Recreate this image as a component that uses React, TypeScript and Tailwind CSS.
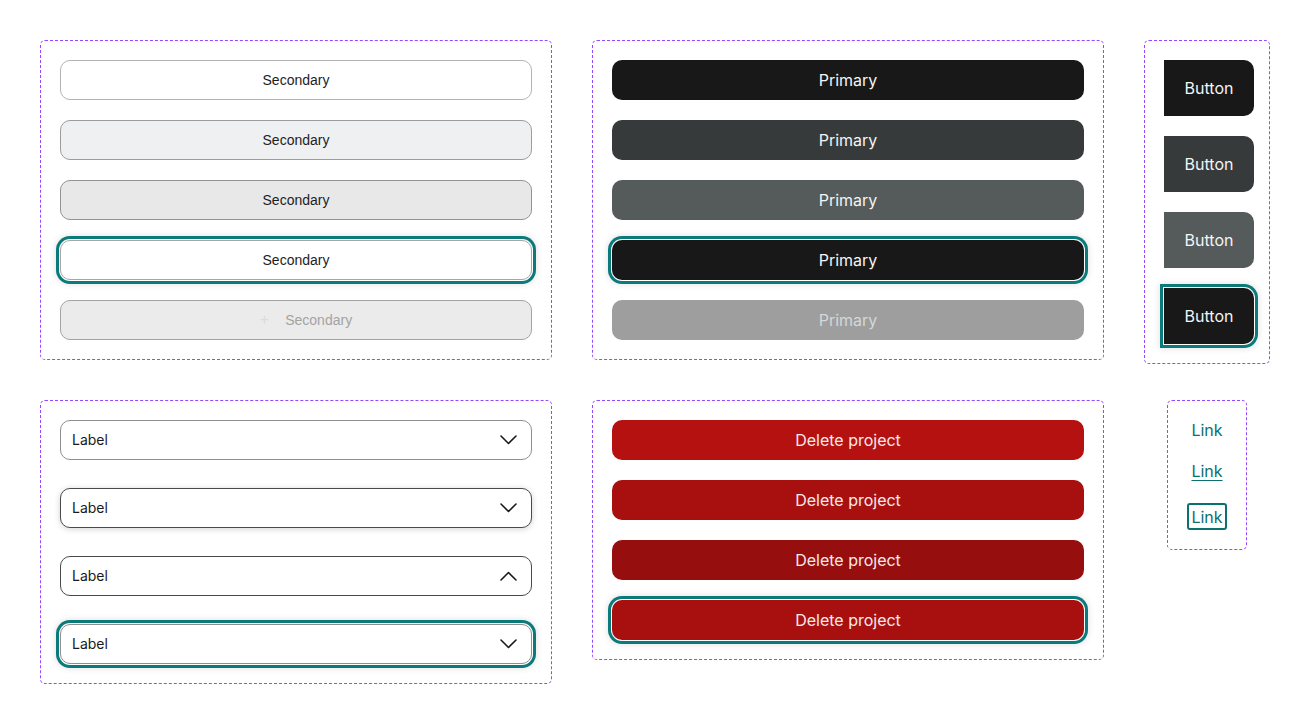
import React from 'react';

const inter = "font-['Inter',sans-serif]";
const arial = "font-['Liberation_Sans',Arial,sans-serif]";
const focusRing = 'shadow-[0_0_0_1px_#ffffff,0_0_0_4px_#0a7a7a,0_0_6px_5px_rgba(0,0,0,0.1)]';

function Frame({ className, children }: { className?: string; children: React.ReactNode }) {
  return (
    <div className={`border border-dashed border-[#9747ff] rounded-[5px] flex flex-col ${className ?? ''}`}>
      {children}
    </div>
  );
}

function Chevron({ up }: { up?: boolean }) {
  return (
    <svg width="17" height="10" viewBox="0 0 17 10" fill="none" className="shrink-0">
      <path
        d={up ? 'M1 9l7.5-7.5L16 9' : 'M1 1l7.5 7.5L16 1'}
        stroke="#1a1a1a"
        strokeWidth="1.6"
        strokeLinecap="round"
        strokeLinejoin="round"
      />
    </svg>
  );
}

function Select({ variant }: { variant: 'default' | 'hover' | 'open' | 'focus' }) {
  const styles = {
    default: 'border-[#8f8f8f]',
    hover: 'border-[#4a4a4a] shadow-[0_1px_6px_rgba(0,0,0,0.18)]',
    open: 'border-[#4a4a4a]',
    focus: `border-[#8f8f8f] ${focusRing}`,
  }[variant];
  return (
    <div className={`h-10 w-full rounded-[10px] border bg-white flex items-center justify-between pl-[11px] pr-[14px] ${styles}`}>
      <span className={`${inter} text-sm text-[#1a1a1a]`}>Label</span>
      <Chevron up={variant === 'open'} />
    </div>
  );
}

export default function App() {
  const secondary = [
    'bg-white border-[#b3b3b3] text-[#1e1e1e]',
    'bg-[#eef0f1] border-[#9c9c9c] text-[#1e1e1e]',
    'bg-[#e8e8e9] border-[#939393] text-[#1e1e1e]',
    `bg-white border-[#a6a6a6] text-[#1e1e1e] ${focusRing}`,
  ];
  const primary = [
    'bg-[#181818]',
    'bg-[#373a3b]',
    'bg-[#555a5a]',
    `bg-[#181818] ${focusRing}`,
  ];
  const danger = [
    'bg-[#b51111]',
    'bg-[#a81010]',
    'bg-[#960e0e]',
    `bg-[#a81010] ${focusRing}`,
  ];

  return (
    <div className="min-h-screen bg-white p-10">
      <div className="grid grid-cols-[512px_512px_126px] grid-rows-[320px_auto] gap-10 items-start">
        {/* Secondary */}
        <Frame className="gap-5 p-[19px] h-[320px]">
          {secondary.map((cls, i) => (
            <button key={i} className={`h-10 w-full shrink-0 rounded-[10px] border ${arial} text-sm ${cls}`}>
              Secondary
            </button>
          ))}
          <button className={`h-10 w-full shrink-0 rounded-[10px] border border-[#a3a3a3] bg-[#ebebeb] ${arial} text-sm text-[#a3a3a3] flex items-center justify-center gap-4 pl-5`}>
            <span className="text-[#dcdcdc] text-base font-light leading-none">+</span>
            Secondary
          </button>
        </Frame>

        {/* Primary */}
        <Frame className="gap-5 p-[19px] h-[320px]">
          {primary.map((cls, i) => (
            <button key={i} className={`h-10 w-full shrink-0 rounded-[10px] ${inter} text-base text-[#f4f4f4] ${cls}`}>
              Primary
            </button>
          ))}
          <button className={`h-10 w-full shrink-0 rounded-[10px] bg-[#9e9e9e] ${inter} text-base text-[#d3d8d8]`}>
            Primary
          </button>
        </Frame>

        {/* Square-left buttons */}
        <Frame className="gap-5 pl-[19px] pr-[15px] py-[19px] h-[324px]">
          {primary.map((cls, i) => (
            <button key={i} className={`h-14 w-[90px] shrink-0 rounded-r-[10px] ${inter} text-base text-[#f4f4f4] ${cls}`}>
              Button
            </button>
          ))}
        </Frame>

        {/* Selects */}
        <Frame className="gap-7 p-[19px]">
          <Select variant="default" />
          <Select variant="hover" />
          <Select variant="open" />
          <Select variant="focus" />
        </Frame>

        {/* Destructive */}
        <Frame className="gap-5 p-[19px]">
          {danger.map((cls, i) => (
            <button key={i} className={`h-10 w-full shrink-0 rounded-[10px] ${inter} text-base text-[#f7eaea] ${cls}`}>
              Delete project
            </button>
          ))}
        </Frame>

        {/* Links */}
        <div className="flex justify-center">
          <Frame className="items-center w-20 py-[19px]">
            <a className={`${inter} text-base leading-5 text-[#0b7070]`}>Link</a>
            <a className={`${inter} text-base leading-5 text-[#0b7070] underline underline-offset-[3px] mt-[21px]`}>Link</a>
            <a className={`${inter} text-base leading-5 text-[#0b7070] border-2 border-[#0b7070] rounded-[3px] px-[2px] py-[1.5px] mt-[22px]`}>
              Link
            </a>
          </Frame>
        </div>
      </div>
    </div>
  );
}
